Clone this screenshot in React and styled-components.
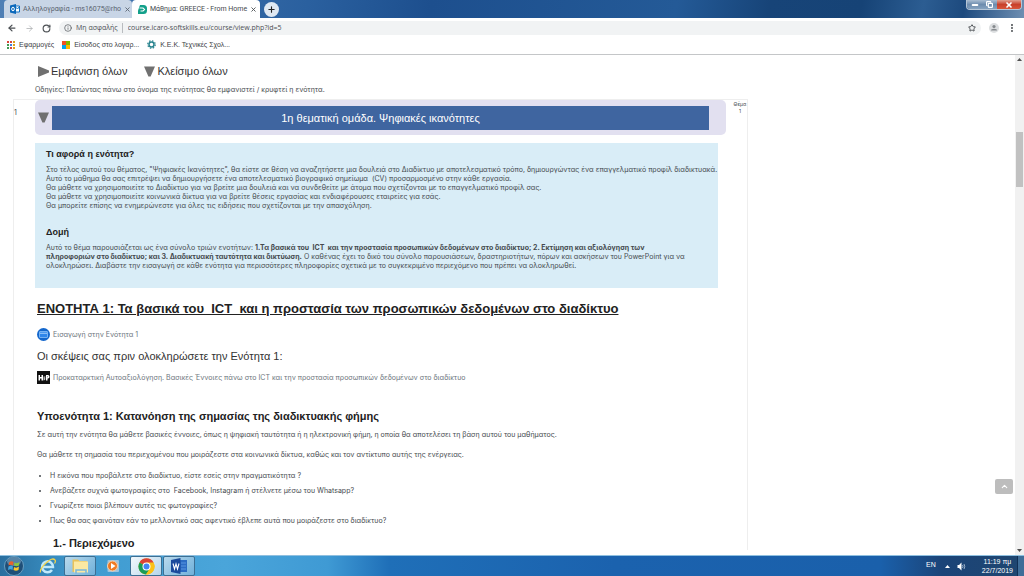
import React from "react";
import styled, { createGlobalStyle } from "styled-components";
import {
  ArrowLeft,
  ArrowRight,
  RotateCw,
  Info,
  Star,
  X,
  Plus,
  Minus,
  Copy,
  EllipsisVertical,
  ChevronUp,
} from "lucide-react";

const GlobalStyle = createGlobalStyle`
  * {
    box-sizing: border-box;
  }
  body {
    margin: 0;
    background: #fff;
    color: #454a4e;
    font-family: Inter, sans-serif;
    font-size: 7px;
  }
  h2, h3, h4 {
    font-family: "Liberation Sans", Arial, sans-serif;
  }
  button {
    padding: 0;
    border: 0;
    background: none;
    color: inherit;
    font: inherit;
  }
  a {
    color: inherit;
    text-decoration: none;
  }
`;

const Desktop = styled.div`
  display: flex;
  flex-direction: column;
  height: 100vh;
  overflow: hidden;
`;

/* ---------- browser window ---------- */

const TabStrip = styled.header`
  display: flex;
  flex: none;
  height: 18px;
  padding-left: 4px;
  background: linear-gradient(
    100deg,
    #4f7fb5 0%,
    #2a609f 30%,
    #1d4f8e 42%,
    #245a97 66%,
    #174478 75%,
    #164376 84%,
    #2c5d92 90%,
    #1d4a7e 94%,
    #6f8fb2 100%
  );
  font-family: Roboto, sans-serif;
`;

const Tab = styled.div`
  display: flex;
  align-items: center;
  gap: 3px;
  width: 128px;
  padding: 0 5px 0 6px;
  border-radius: 4px 4px 0 0;
  background: ${(props) => (props.$active ? "#fff" : "#c8d5e6")};
  color: ${(props) => (props.$active ? "#45494d" : "#5a6470")};

  span {
    flex: 1;
    white-space: nowrap;
  }
  svg {
    flex: none;
  }
  button {
    display: flex;
  }
`;

const NewTab = styled.button`
  display: flex;
  align-items: center;
  justify-content: center;
  align-self: center;
  width: 15px;
  height: 15px;
  margin-left: 4px;
  border-radius: 50%;
  background: #dfe8f2;
  color: #222;
`;

const WindowButtons = styled.div`
  display: flex;
  height: 10px;
  margin: 0 2px 0 auto;
  overflow: hidden;
  border: 1px solid #b5c5d6;
  border-top: 0;
  border-radius: 0 0 4px 4px;
`;

const WindowButton = styled.button`
  display: flex;
  align-items: center;
  justify-content: center;
  width: ${(props) => (props.$close ? "24px" : "15px")};
  background: ${(props) =>
    props.$close
      ? "linear-gradient(#e0a090, #c8402a 50%, #d9563a)"
      : "linear-gradient(#a9bdd2, #6d8cae 50%, #86a3c0)"};
  color: #fff;
`;

const Toolbar = styled.nav`
  display: flex;
  flex: none;
  align-items: center;
  gap: 8px;
  height: 20px;
  padding: 0 7px;
  color: #4c5054;
  font-family: "Open Sans", sans-serif;

  button {
    display: flex;
  }
`;

const AddressBar = styled.div`
  display: flex;
  flex: 1;
  align-items: center;
  gap: 4px;
  height: 14px;
  padding: 0 5px;
  border-radius: 7px;
  background: #f1f3f4;
  line-height: 10px;

  input {
    flex: 1;
    height: 10px;
    padding: 0 0 0 5px;
    border: 0;
    border-left: 1px solid #b9bcc0;
    outline: 0;
    background: none;
    color: #4c5054;
    font: inherit;
  }
`;

const Bookmarks = styled.nav`
  display: flex;
  flex: none;
  align-items: center;
  gap: 8px;
  height: 17px;
  padding: 0 7px 3px;
  border-bottom: 1px solid #c4c6c8;
  font-family: "Liberation Sans", Arial, sans-serif;

  a {
    display: flex;
    align-items: center;
    gap: 4px;
    color: #3c4043;
    white-space: nowrap;
  }
`;

/* ---------- course page ---------- */

const Viewport = styled.div`
  display: flex;
  flex: 1;
  min-height: 0;
`;

const Page = styled.div`
  position: relative;
  display: flex;
  flex: 1;
  min-width: 0;
  padding-left: 13px;
  overflow: hidden;
`;

const Main = styled.main`
  flex: 735;
  min-width: 0;
`;

const Blank = styled.aside`
  flex: 267;
`;

const ToggleAll = styled.div`
  display: flex;
  gap: 17px;
  padding: 9px 0 0 25px;
  color: #333;
  font-family: "Liberation Sans", Arial, sans-serif;
  font-size: 11px;
  line-height: 14px;

  a {
    display: flex;
    align-items: center;
    gap: 2px;
  }
`;

const Instructions = styled.p`
  margin: 7px 0 4px 22px;
  line-height: 10px;
`;

const Section = styled.section`
  display: grid;
  grid-template-columns: 21px minmax(0, 1fr) 21px;
  border: 1px solid #eee;
  border-bottom: 0;
`;

const SectionNumber = styled.div`
  padding-top: 9px;
  line-height: 8px;
`;

const SideLabel = styled.div`
  padding: 1px 0 0 7px;
  font-size: 5px;
  line-height: 7px;
  text-align: center;
`;

const SectionToggle = styled.h3`
  display: flex;
  align-items: center;
  gap: 3px;
  height: 35px;
  margin: 0;
  padding: 0 17px 0 3px;
  border-radius: 5px;
  background: #e2e0f0;

  a {
    flex: 1;
    background: #3f65a0;
    color: #fff;
    font-size: 11px;
    font-weight: 400;
    line-height: 24px;
    text-align: center;
  }
`;

const Summary = styled.div`
  min-height: 145px;
  margin: 8px 8px 0 0;
  padding: 6px 0 0 11px;
  background: #d9edf7;
  white-space: nowrap;

  h4 {
    margin: 0 0 6px;
    color: #222;
    font-size: 9px;
    line-height: 10px;
  }
  p {
    margin: 0 0 17px;
    line-height: 9px;
  }
`;

const Activities = styled.div`
  padding: 13px 0 0 2px;
`;

const UnitTitle = styled.h2`
  margin: 0 0 10px;
  color: #222;
  font-size: 13px;
  line-height: 16px;
  text-decoration: underline;
  white-space: pre-wrap;
`;

const Activity = styled.a`
  display: flex;
  align-items: center;
  gap: 3px;
  height: 14px;
  color: #6c757d;
`;

const Question = styled.h4`
  margin: 8px 0 7px;
  color: #333;
  font-size: 11px;
  font-weight: 400;
  line-height: 14px;
`;

const Subtitle = styled.h3`
  margin: 24px 0 6px;
  color: #222;
  font-size: 11px;
  line-height: 16px;
`;

const Paragraph = styled.p`
  margin: 0 0 10px;
  line-height: 10px;
`;

const Bullets = styled.ul`
  margin: -2px 0 0;
  padding-left: 13px;
  line-height: 15px;
`;

const ContentTitle = styled.h4`
  margin: 8px 0 0 16px;
  color: #222;
  font-size: 11px;
  line-height: 14px;
`;

const BackToTop = styled.button`
  position: absolute;
  right: 2px;
  bottom: 61px;
  display: flex;
  align-items: center;
  justify-content: center;
  width: 18px;
  height: 15px;
  border-radius: 2px;
  background: #bdbdbd;
  color: #fff;
`;

const Scrollbar = styled.div`
  display: flex;
  flex: none;
  flex-direction: column;
  align-items: center;
  justify-content: space-between;
  width: 9px;
  padding: 3px 0;
  background: #f1f1f1;
`;

const Thumb = styled.div`
  width: 7px;
  height: 55px;
  margin: 71px 0 auto;
  background: #c1c1c1;
`;

/* ---------- taskbar ---------- */

const Taskbar = styled.footer`
  display: flex;
  flex: none;
  align-items: center;
  height: 21px;
  padding-left: 4px;
  border-top: 1px solid #8fc0e0;
  background: linear-gradient(
    90deg,
    #2a6f9f 0%,
    #3f9bd0 8%,
    #4aa5da 22%,
    #3f9ad4 32%,
    #1f6fb8 38%,
    #1b62ae 60%,
    #1a60ab 86%,
    #1b4478 92%,
    #1f4670 100%
  );
  color: #fff;
  font-family: "Liberation Sans", Arial, sans-serif;
`;

const Task = styled.button`
  display: flex;
  align-items: center;
  justify-content: center;
  width: 32px;
  height: 20px;
  margin-right: 1px;
  border: 1px solid ${(props) => (props.$open ? "#3c6f93" : "transparent")};
  border-radius: 2px;
  background: ${(props) =>
    props.$active
      ? "linear-gradient(135deg, #f2f8fc, #b5d5ea)"
      : props.$open
      ? "linear-gradient(135deg, #b9d9ec, #6fb0da)"
      : "none"};
`;

const StartButton = styled.button`
  display: flex;
  margin-right: 7px;
`;

const Tray = styled.div`
  display: flex;
  align-items: center;
  gap: 7px;
  height: 100%;
  margin-left: auto;

  span {
    margin: 0 2px 3px 0;
  }
`;

const Clock = styled.time`
  margin: 0 -3px 0 9px;
  line-height: 9px;
  text-align: center;
`;

const ShowDesktop = styled.button`
  align-self: stretch;
  width: 7px;
  border-left: 1px solid #0f2f55;
  background: #3f6d98;
`;

const Triangle = ({ down, size = 11 }) => (
  <svg width={size} height={size} viewBox="0 0 10 10" fill="#707070">
    <path d={down ? "M0 0.5H10L6 9.5H4Z" : "M0 0L10 4V6L0 10Z"} />
  </svg>
);

const OutlookIcon = () => (
  <svg width="10" height="10" viewBox="0 0 20 20">
    <path d="M10 4h9v12h-9z" fill="#fff" stroke="#1273c4" strokeWidth="2" />
    <path d="M10 5l5 5 4-5" fill="none" stroke="#1273c4" strokeWidth="2" />
    <path d="M0 3L12 0V20L0 17Z" fill="#0a68bb" />
    <ellipse cx="6" cy="10" rx="2.6" ry="3.6" fill="none" stroke="#fff" strokeWidth="2" />
  </svg>
);

const CourseIcon = () => (
  <svg width="9" height="9" viewBox="0 0 18 18">
    <path d="M4 0H11A7 7 0 0 1 18 7V11A7 7 0 0 1 11 18H0V11Z" fill="#13a08a" />
    <path d="M3 6H10L13 9L10 12H5" fill="none" stroke="#fff" strokeWidth="2.4" />
  </svg>
);

const appColors = ["#d9453a", "#d9453a", "#e0a01b", "#3f9b52", "#3f7de0", "#e0a01b", "#3f9b52", "#d9453a", "#e0a01b"];

const AppsIcon = () => (
  <svg width="8" height="8" viewBox="0 0 8 8">
    {appColors.map((color, i) => (
      <rect key={i} x={(i % 3) * 3} y={Math.floor(i / 3) * 3} width="2" height="2" fill={color} />
    ))}
  </svg>
);

const MicrosoftIcon = () => (
  <svg width="8" height="8" viewBox="0 0 8 8">
    <path d="M0 0h4v4H0z" fill="#f05022" />
    <path d="M4 0h4v4H4z" fill="#7fb900" />
    <path d="M0 4h4v4H0z" fill="#00a3ee" />
    <path d="M4 4h4v4H4z" fill="#ffb800" />
  </svg>
);

const SchoolIcon = () => (
  <svg width="9" height="9" viewBox="0 0 18 18" fill="none" stroke="#2b8590">
    <circle cx="9" cy="9" r="5" strokeWidth="3" />
    <circle cx="9" cy="9" r="7.5" strokeWidth="2.5" strokeDasharray="3 2.9" />
  </svg>
);

const ProfileIcon = () => (
  <svg width="10" height="10" viewBox="0 0 20 20">
    <circle cx="10" cy="10" r="10" fill="#dcdee0" />
    <circle cx="10" cy="7" r="3.2" fill="#85898d" />
    <path d="M4 15Q4 11.5 10 11.5T16 15Z" fill="#85898d" />
  </svg>
);

const FolderIcon = () => (
  <svg width="13" height="13" viewBox="0 0 26 26">
    <circle cx="13" cy="13" r="13" fill="#1467cc" />
    <path d="M5 8Q5 7 6 7H20Q21 7 21 8V18Q21 19 20 19H6Q5 19 5 18Z" fill="#2f86ea" stroke="#8cc0f8" strokeWidth="1.6" />
    <path d="M6 10.5H20" stroke="#a9d1fb" strokeWidth="2" />
  </svg>
);

const H5PIcon = () => (
  <svg width="13" height="13" viewBox="0 0 26 26">
    <rect width="26" height="26" fill="#111" />
    <path d="M3 8H6V12H9V8H12V19H9V15H6V19H3Z" fill="#fff" />
    <path d="M18 8H22Q25 8 25 11.5T22 15H21V19H18Z" fill="#fff" />
    <path d="M13 11H17V13H15L17 15Q17 19 13 19Z" fill="#bbb" />
    <path d="M21 10.5H22V12.5H21Z" fill="#111" />
  </svg>
);

const WindowsOrb = () => (
  <svg width="20" height="20" viewBox="0 0 40 40">
    <circle cx="20" cy="20" r="19" fill="#1f4f78" stroke="#7fb0cf" strokeWidth="1.5" />
    <ellipse cx="20" cy="11" rx="14" ry="9" fill="#7fa8c4" opacity="0.6" />
    <path d="M10 13Q15 9 19 12L18 19Q14 16 9 19Z" fill="#e8622c" />
    <path d="M21 13Q26 16 31 12L30 19Q25 22 20 19Z" fill="#8cc63e" />
    <path d="M9 21Q14 18 18 21L17 28Q13 25 8 28Z" fill="#43a5e0" />
    <path d="M20 22Q25 25 30 21L29 28Q24 31 19 28Z" fill="#fbc62e" />
  </svg>
);

const ExplorerIcon = () => (
  <svg width="17" height="17" viewBox="0 0 34 34">
    <path
      d="M26 24A11 11 0 1 1 28 18H8"
      fill="none"
      stroke="#bfe9fb"
      strokeWidth="5"
    />
    <path d="M3 29Q1 22 14 10T32 4Q34 6 31 11" fill="none" stroke="#f5d44a" strokeWidth="2.5" />
  </svg>
);

const LibraryIcon = () => (
  <svg width="18" height="16" viewBox="0 0 36 32">
    <path d="M3 3H14L17 6H32V28H3Z" fill="#e8c25a" />
    <path d="M6 7H34V29H6Z" fill="#fbe9a3" />
    <path d="M10 31V24H30V31" fill="none" stroke="#78b6dc" strokeWidth="3" />
  </svg>
);

const PlayerIcon = () => (
  <svg width="14" height="14" viewBox="0 0 28 28">
    <rect x="3" y="2" width="23" height="24" rx="2" fill="#9dc4de" />
    <circle cx="13" cy="14" r="10" fill="#ef7a23" stroke="#f8d3ae" strokeWidth="2" />
    <path d="M10 8L19 14L10 20Z" fill="#fff" />
  </svg>
);

const ChromeIcon = () => (
  <svg width="17" height="17" viewBox="0 0 34 34">
    <circle cx="17" cy="17" r="16" fill="#fbc116" />
    <path d="M17 17L3 9A16 16 0 0 1 31 9Z" fill="#db4437" />
    <path d="M17 17L3 9A16 16 0 0 0 16 33L24 21Z" fill="#1a9c58" />
    <path d="M17 9H31A16 16 0 0 1 16 33L24 21Z" fill="#fbc116" />
    <circle cx="17" cy="17" r="8" fill="#fff" />
    <circle cx="17" cy="17" r="6" fill="#4285f4" />
  </svg>
);

const WordIcon = () => (
  <svg width="17" height="16" viewBox="0 0 34 32">
    <path d="M14 4H32V28H14Z" fill="#2b6cc4" />
    <path d="M20 10H30M20 16H30M20 22H30" stroke="#5b95e0" strokeWidth="2" />
    <path d="M0 4L19 0V32L0 28Z" fill="#1a4a9c" />
    <path d="M4 11L7 22L10 12L13 22L16 11" fill="none" stroke="#fff" strokeWidth="2.2" />
  </svg>
);

const SpeakerIcon = () => (
  <svg width="9" height="9" viewBox="0 0 18 18">
    <path d="M1 6H4L9 1V17L4 12H1Z" fill="#fff" />
    <path d="M11 6Q13 9 11 12M14 4Q17 9 14 14" fill="none" stroke="#c6d6e6" strokeWidth="1.5" />
  </svg>
);

const tabs = [
  { title: "Αλληλογραφία - ms16075@rho", icon: <OutlookIcon /> },
  { title: "Μάθημα: GREECE - From Home", icon: <CourseIcon />, active: true },
];

const bookmarks = [
  { title: "Εφαρμογές", icon: <AppsIcon /> },
  { title: "Είσοδος στο λογαρ...", icon: <MicrosoftIcon /> },
  { title: "Κ.Ε.Κ. Τεχνικές Σχολ...", icon: <SchoolIcon /> },
];

const questions = [
  "Η εικόνα που προβάλετε στο διαδίκτυο, είστε εσείς στην πραγματικότητα ?",
  "Ανεβάζετε συχνά φωτογραφίες στο \u00a0Facebook, Instagram ή στέλνετε μέσω του Whatsapp?",
  "Γνωρίζετε ποιοι βλέπουν αυτές τις φωτογραφίες?",
  "Πως θα σας φαινόταν εάν το μελλοντικό σας αφεντικό έβλεπε αυτά που μοιράζεστε στο διαδίκτυο?",
];

const Browser = () => (
  <>
    <TabStrip>
      {tabs.map((tab) => (
        <Tab key={tab.title} $active={tab.active}>
          {tab.icon}
          <span>{tab.title}</span>
          <button aria-label="Κλείσιμο καρτέλας">
            <X size={7} strokeWidth={3} />
          </button>
        </Tab>
      ))}
      <NewTab aria-label="Νέα καρτέλα">
        <Plus size={9} strokeWidth={3} />
      </NewTab>
      <WindowButtons>
        <WindowButton aria-label="Ελαχιστοποίηση">
          <Minus size={8} strokeWidth={6} />
        </WindowButton>
        <WindowButton aria-label="Επαναφορά">
          <Copy size={7} strokeWidth={4} />
        </WindowButton>
        <WindowButton $close aria-label="Κλείσιμο">
          <X size={8} strokeWidth={5} />
        </WindowButton>
      </WindowButtons>
    </TabStrip>
    <Toolbar>
      <button aria-label="Πίσω">
        <ArrowLeft size={10} strokeWidth={3} />
      </button>
      <button aria-label="Εμπρός">
        <ArrowRight size={9} color="#a9acaf" />
      </button>
      <button aria-label="Ανανέωση">
        <RotateCw size={9} strokeWidth={3} />
      </button>
      <AddressBar>
        <Info size={8} />
        <span>Μη ασφαλής</span>
        <input aria-label="Διεύθυνση" defaultValue="course.icaro-softskills.eu/course/view.php?id=5" />
        <button aria-label="Σελιδοδείκτης">
          <Star size={8} strokeWidth={3} />
        </button>
      </AddressBar>
      <button aria-label="Προφίλ">
        <ProfileIcon />
      </button>
      <button aria-label="Μενού">
        <EllipsisVertical size={10} strokeWidth={3} />
      </button>
    </Toolbar>
    <Bookmarks>
      {bookmarks.map((item) => (
        <a href="#" key={item.title}>
          {item.icon}
          {item.title}
        </a>
      ))}
    </Bookmarks>
  </>
);

const TopicSummary = () => (
  <Summary>
    <h4>Τι αφορά η ενότητα?</h4>
    <p>
      Στο τέλος αυτού του θέματος, "Ψηφιακές Ικανότητες", θα είστε σε θέση να αναζητήσετε μια δουλειά στο Διαδίκτυο με
      αποτελεσματικό τρόπο, δημιουργώντας ένα επαγγελματικό προφίλ διαδικτυακά.
      <br />
      Αυτό το μάθημα θα σας επιτρέψει να δημιουργήσετε ένα αποτελεσματικό βιογραφικό σημείωμα &nbsp;(CV) προσαρμοσμένο
      στην κάθε εργασία.
      <br />
      Θα μάθετε να χρησιμοποιείτε το Διαδίκτυο για να βρείτε μια δουλειά και να συνδεθείτε με άτομα που σχετίζονται με
      το επαγγελματικό προφίλ σας.
      <br />
      Θα μάθετε να χρησιμοποιείτε κοινωνικά δίκτυα για να βρείτε θέσεις εργασίας και ενδιαφέρουσες εταιρείες για εσάς.
      <br />
      Θα μπορείτε επίσης να ενημερώνεστε για όλες τις ειδήσεις που σχετίζονται με την απασχόληση.
    </p>
    <h4>Δομή</h4>
    <p>
      Αυτό το θέμα παρουσιάζεται ως ένα σύνολο τριών ενοτήτων:{" "}
      <b>
        1.Τα βασικά του &nbsp;ICT &nbsp;και την προστασία προσωπικών δεδομένων στο διαδίκτυο; 2. Εκτίμηση και αξιολόγηση
        των
        <br />
        πληροφοριών στο διαδίκτυο; και 3. Διαδικτυακή ταυτότητα και δικτύωση.
      </b>{" "}
      Ο καθένας έχει το δικό του σύνολο παρουσιάσεων, δραστηριοτήτων, πόρων και ασκήσεων του PowerPoint για να
      <br />
      ολοκληρώσει. Διαβάστε την εισαγωγή σε κάθε ενότητα για περισσότερες πληροφορίες σχετικά με το συγκεκριμένο
      περιεχόμενο που πρέπει να ολοκληρωθεί.
    </p>
  </Summary>
);

const Course = () => (
  <Main>
    <ToggleAll>
      <a href="#">
        <Triangle />
        Εμφάνιση όλων
      </a>
      <a href="#">
        <Triangle down />
        Κλείσιμο όλων
      </a>
    </ToggleAll>
    <Instructions>Οδηγίες: Πατώντας πάνω στο όνομα της ενότητας θα εμφανιστεί / κρυφτεί η ενότητα.</Instructions>
    <Section>
      <SectionNumber>1</SectionNumber>
      <div>
        <SectionToggle>
          <Triangle down />
          <a href="#">1η θεματική ομάδα. Ψηφιακές ικανότητες</a>
        </SectionToggle>
        <TopicSummary />
        <Activities>
          <UnitTitle>ΕΝΟΤΗΤΑ 1: Τα βασικά του  ICT  και η προστασία των προσωπικών δεδομένων στο διαδίκτυο</UnitTitle>
          <Activity href="#">
            <FolderIcon />
            Εισαγωγή στην Ενότητα 1
          </Activity>
          <Question>Οι σκέψεις σας πριν ολοκληρώσετε την Ενότητα 1:</Question>
          <Activity href="#">
            <H5PIcon />
            Προκαταρκτική Αυτοαξιολόγηση. Βασικές Έννοιες πάνω στο ICT και την προστασία προσωπικών δεδομένων στο
            διαδίκτυο
          </Activity>
          <Subtitle>Υποενότητα 1: Κατανόηση της σημασίας της διαδικτυακής φήμης</Subtitle>
          <Paragraph>
            Σε αυτή την ενότητα θα μάθετε βασικές έννοιες, όπως η ψηφιακή ταυτότητα ή η ηλεκτρονική φήμη, η οποία θα
            αποτελέσει τη βάση αυτού του μαθήματος.
          </Paragraph>
          <Paragraph>
            Θα μάθετε τη σημασία του περιεχομένου που μοιράζεστε στα κοινωνικά δίκτυα, καθώς και τον αντίκτυπο αυτής της
            ενέργειας.
          </Paragraph>
          <Bullets>
            {questions.map((question) => (
              <li key={question}>{question}</li>
            ))}
          </Bullets>
          <ContentTitle>1.- Περιεχόμενο</ContentTitle>
        </Activities>
      </div>
      <SideLabel>
        Θέμα
        <br />1
      </SideLabel>
    </Section>
  </Main>
);

const WindowsTaskbar = () => (
  <Taskbar>
    <StartButton aria-label="Έναρξη">
      <WindowsOrb />
    </StartButton>
    <Task aria-label="Internet Explorer">
      <ExplorerIcon />
    </Task>
    <Task $open aria-label="Εξερεύνηση">
      <LibraryIcon />
    </Task>
    <Task aria-label="Media Player">
      <PlayerIcon />
    </Task>
    <Task $open $active aria-label="Chrome">
      <ChromeIcon />
    </Task>
    <Task $open aria-label="Word">
      <WordIcon />
    </Task>
    <Tray>
      <span>EN</span>
      <svg width="5" height="3" viewBox="0 0 5 3">
        <path d="M0 3L2.5 0L5 3Z" fill="#fff" />
      </svg>
      <SpeakerIcon />
      <Clock>
        11:19 πμ
        <br />
        22/7/2019
      </Clock>
      <ShowDesktop aria-label="Επιφάνεια εργασίας" />
    </Tray>
  </Taskbar>
);

const App = () => (
  <Desktop>
    <GlobalStyle />
    <Browser />
    <Viewport>
      <Page>
        <Course />
        <Blank />
        <BackToTop aria-label="Επιστροφή στην κορυφή">
          <ChevronUp size={9} strokeWidth={3} />
        </BackToTop>
      </Page>
      <Scrollbar>
        <svg width="5" height="3" viewBox="0 0 5 3">
          <path d="M0 3L2.5 0L5 3Z" fill="#505050" />
        </svg>
        <Thumb />
        <svg width="5" height="3" viewBox="0 0 5 3">
          <path d="M0 0L2.5 3L5 0Z" fill="#505050" />
        </svg>
      </Scrollbar>
    </Viewport>
    <WindowsTaskbar />
  </Desktop>
);

export default App;
